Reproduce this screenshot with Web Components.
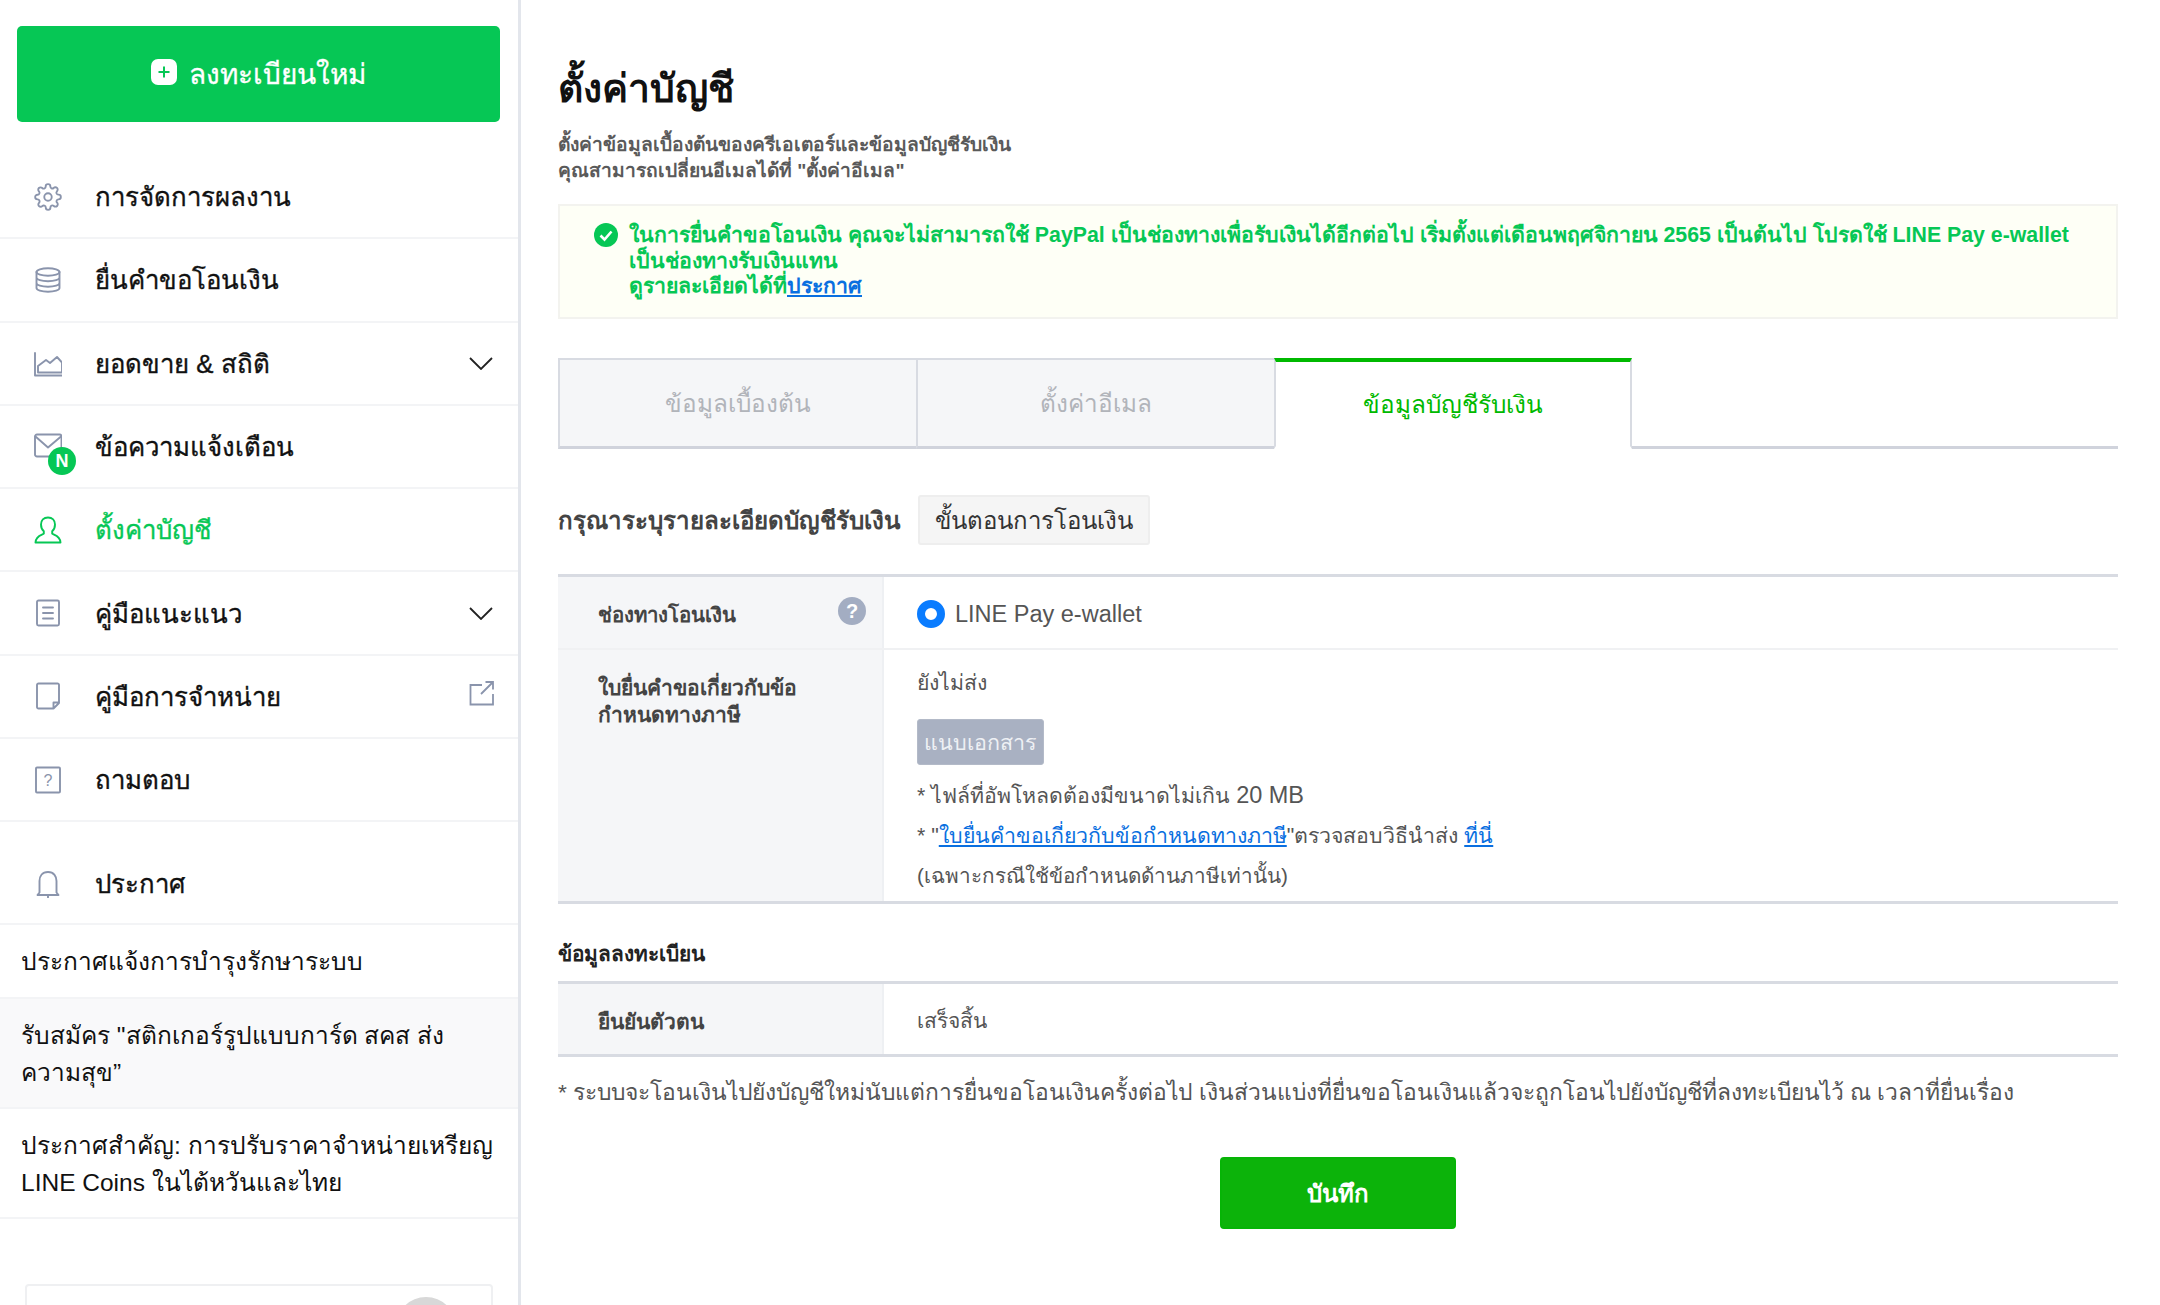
<!doctype html>
<html lang="th"><head><meta charset="utf-8"><title>ตั้งค่าบัญชี</title>
<style>
html,body{margin:0;height:1305px;overflow:hidden;background:#fff;font-family:"Liberation Sans","Noto Sans",sans-serif;color:#111}
</style></head><body>
<app-shell>
  <side-nav slot="side"></side-nav>
  <account-page slot="main"></account-page>
</app-shell>
<script>
const stroke = c => `fill="none" stroke="${c}" stroke-width="1.900" stroke-linejoin="round" stroke-linecap="round"`
const icons = {
  gear: `<g transform="scale(1.167)" stroke-width="1.600"><circle cx="12" cy="12" r="3.200"/><path d="M19.4 15a1.65 1.65 0 0 0 .33 1.82l.06.06a2 2 0 0 1 0 2.83 2 2 0 0 1-2.83 0l-.06-.06a1.65 1.65 0 0 0-1.82-.33 1.65 1.65 0 0 0-1 1.51V21a2 2 0 0 1-2 2 2 2 0 0 1-2-2v-.09A1.65 1.65 0 0 0 9 19.4a1.65 1.65 0 0 0-1.82.33l-.06.06a2 2 0 0 1-2.83 0 2 2 0 0 1 0-2.83l.06-.06a1.65 1.65 0 0 0 .33-1.82 1.65 1.65 0 0 0-1.51-1H3a2 2 0 0 1-2-2 2 2 0 0 1 2-2h.09A1.65 1.65 0 0 0 4.6 9a1.65 1.65 0 0 0-.33-1.82l-.06-.06a2 2 0 0 1 0-2.83 2 2 0 0 1 2.83 0l.06.06a1.65 1.65 0 0 0 1.82.33H9a1.65 1.65 0 0 0 1-1.51V3a2 2 0 0 1 2-2 2 2 0 0 1 2 2v.09a1.65 1.65 0 0 0 1 1.51 1.65 1.65 0 0 0 1.82-.33l.06-.06a2 2 0 0 1 2.83 0 2 2 0 0 1 0 2.83l-.06.06a1.65 1.65 0 0 0-.33 1.82V9a1.65 1.65 0 0 0 1.51 1H21a2 2 0 0 1 2 2 2 2 0 0 1-2 2h-.09a1.65 1.65 0 0 0-1.51 1z"/></g>`,
  db: `<ellipse cx="14" cy="6" rx="11.500" ry="3.800"/><path d="M2.500 6v16c0 2.100 5 3.800 11.500 3.800s11.500-1.700 11.500-3.800V6M2.500 11.500c0 2.100 5 3.800 11.500 3.800s11.500-1.700 11.500-3.800M2.500 17c0 2.100 5 3.800 11.500 3.800s11.500-1.700 11.500-3.800"/>`,
  chart: `<path d="M1 4v22.500h27M4 23.500h24v-10l-5-5.500-7 6-4-3-8 6z"/>`,
  mail: `<rect x="1" y="1.500" width="26.500" height="22" rx="2"/><path d="M1.500 3.500L14 14.500 27 3.500"/>`,
  user: `<path d="M14 1.500c-4.300 0-7 3-7 7 0 3 1.100 5.200 2.800 6.800v2.400c-1.300 1.400-7.800 1.800-8.300 8.800h25c-.5-7-7-7.400-8.300-8.800v-2.400c1.700-1.600 2.800-3.800 2.800-6.800 0-4-2.700-7-7-7z"/>`,
  list: `<rect x="3" y="1.500" width="22" height="25" rx="1.500"/><path d="M9 8.500h10M9 14h10M9 19.500h10"/>`,
  note: `<path d="M4.500 1.500h19a1.500 1.500 0 0 1 1.500 1.500v18l-5.500 5.500h-15a1.500 1.500 0 0 1-1.500-1.500V3a1.500 1.500 0 0 1 1.500-1.500zM25 20.500h-5.500v6"/>`,
  faq: `<rect x="2" y="1.500" width="24" height="25" rx="1"/><text x="14" y="20" font-family="Liberation Sans" font-size="16" text-anchor="middle" fill="#8a94ac" stroke="none">?</text>`,
  bell: `<path d="M14 2c-6 0-8.500 4.500-8.500 9v11.500L3.500 25h21l-2-2.500V11c0-4.500-2.500-9-8.500-9zM14 25v2.500"/>`
}

class AppShell extends HTMLElement {
  constructor () {
    super()
    this.attachShadow({mode: 'open'}).innerHTML = `<style>
      :host{display:grid;grid-template-columns:521px 1fr;height:1305px;overflow:hidden}
      .side{border-right:3px solid #e3e6ec;box-sizing:border-box;overflow:hidden}
      .main{padding:0 42px 0 37px;min-width:0}
    </style>
    <div class="side"><slot name="side"></slot></div>
    <div class="main"><slot name="main"></slot></div>`
  }
}

class NavRow extends HTMLElement {
  constructor () {
    super()
    const color = this.hasAttribute('active') ? '#06c755' : '#8a94ac'
    const badge = this.hasAttribute('badge') ? '<b class="badge">N</b>' : ''
    const h = this.getAttribute('h') || 81.3
    const top = this.getAttribute('top') || 0
    this.attachShadow({mode: 'open'}).innerHTML = `<style>
      :host{display:flex;align-items:center;box-sizing:content-box;height:${h - top}px;padding:${top}px 24px 0 34px;border-bottom:2px solid #f3f4f6;
        font-size:25.800px;-webkit-text-stroke:.35px currentColor;color:${this.hasAttribute('active') ? '#06c755' : '#111'}}
      .ico{position:relative;width:28px;height:28px;flex:none;margin-right:33px}
      svg{display:block}
      .t{flex:1}
      .badge{position:absolute;left:14px;top:14px;width:28px;height:28px;border-radius:50%;background:#06c755;color:#fff;
        font:bold 18px/28px "Liberation Sans";text-align:center;-webkit-text-stroke:0}
    </style>
    <span class="ico"><svg width="28" height="28" viewBox="0 0 28 28" ${stroke(color)}>${icons[this.getAttribute('icon')]}</svg>${badge}</span>
    <span class="t"><slot></slot></span>
    <slot name="end"></slot>`
  }
}

class NewsRow extends HTMLElement {
  constructor () {
    super()
    this.attachShadow({mode: 'open'}).innerHTML = `<style>
      :host{display:block;padding:${this.getAttribute('pad') || '18px 21px 16px'};font-size:24.500px;line-height:37px;color:#111;border-bottom:2px solid #f3f4f6}
      :host([shade]){background:#f9f9fa}
    </style><slot></slot>`
  }
}

class SideNav extends HTMLElement {
  constructor () {
    super()
    const chev = `<svg slot="end" width="24" height="13" viewBox="0 0 24 13" fill="none" stroke="#222" stroke-width="1.800" style="margin-right:1px"><path d="M1 1l11 11L23 1"/></svg>`
    this.attachShadow({mode: 'open'}).innerHTML = `<style>
      :host{display:block}
      .new{display:flex;align-items:center;justify-content:center;gap:12px;height:96px;margin:26px 18px 34px 17px;background:#06c755;border-radius:5px;
        color:#fff;font-size:28px;-webkit-text-stroke:.3px #fff}
      .plus{width:26px;height:26px;background:#fff;border-radius:7px;position:relative;top:-2px}
      .plus svg{display:block}
      .card{height:60px;margin:65px 25px 0 25px;border:2px solid #eff0f2;border-radius:4px;position:relative;overflow:hidden}
      .card i{position:absolute;right:35px;top:11px;width:60px;height:60px;border-radius:50%;background:#d8d8d8}
    </style>
    <div class="new"><span class="plus"><svg width="26" height="26" viewBox="0 0 26 26" stroke="#06c755" stroke-width="2"><path d="M13 7.500v11M7.500 13h11"/></svg></span><span>ลงทะเบียนใหม่</span></div>
    <nav-row icon="gear">การจัดการผลงาน</nav-row>
    <nav-row icon="db">ยื่นคำขอโอนเงิน</nav-row>
    <nav-row icon="chart">ยอดขาย &amp; สถิติ${chev}</nav-row>
    <nav-row icon="mail" badge>ข้อความแจ้งเตือน</nav-row>
    <nav-row icon="user" active>ตั้งค่าบัญชี</nav-row>
    <nav-row icon="list">คู่มือแนะแนว${chev}</nav-row>
    <nav-row icon="note">คู่มือการจำหน่าย<svg slot="end" width="25" height="25" viewBox="0 0 25 25" fill="none" stroke="#8a94ac" stroke-width="1.800" style="position:relative;top:-3px"><path d="M13 4H1.500v19.500H24V13M12 13L24 1M16.500 1H24v7.500"/></svg></nav-row>
    <nav-row icon="faq">ถามตอบ</nav-row>
    <nav-row icon="bell" h="101" top="22">ประกาศ</nav-row>
    <news-row pad="18px 21px 17px">ประกาศแจ้งการบำรุงรักษาระบบ</news-row>
    <news-row shade>รับสมัคร "สติกเกอร์รูปแบบการ์ด สคส ส่งความสุข”</news-row>
    <news-row>ประกาศสำคัญ: การปรับราคาจำหน่ายเหรียญ LINE Coins ในไต้หวันและไทย</news-row>
    <div class="card"><i></i></div>`
  }
}

class NoticeBox extends HTMLElement {
  constructor () {
    super()
    this.attachShadow({mode: 'open'}).innerHTML = `<style>
      :host{display:flex;gap:11px;box-sizing:border-box;height:115px;background:#feffF6;border:2px solid #f3f3ef;padding:17px 30px 0 34px;
        color:#06c755;font-size:21.300px;line-height:25.500px;font-weight:bold}
      svg{flex:none;margin-top:0}
    </style>
    <svg width="24" height="24" viewBox="0 0 24 24"><circle cx="12" cy="12" r="12" fill="#06c755"/><path d="M6.500 12.500l4 4 7-8" fill="none" stroke="#fff" stroke-width="2.600"/></svg>
    <div><slot></slot></div>`
  }
}

class TabBar extends HTMLElement {
  constructor () {
    super()
    this.attachShadow({mode: 'open'}).innerHTML = `<style>
      :host{display:flex;height:91px;box-sizing:border-box;border-bottom:3px solid #d0d3dc;margin-top:39px}
      div{box-sizing:border-box;width:358px;height:91px;margin-bottom:-3px;display:flex;align-items:center;justify-content:center;font-size:24.300px;
        background:#f5f6f8;color:#b1b4ba;border:2px solid #d8dbe2;border-right:0;border-bottom:3px solid #d0d3dc}
      .on{background:#fff;color:#00b900;border:0;border-top:4px solid #00b900;border-left:2px solid #d8dbe2;border-right:2px solid #d8dbe2;border-bottom:3px solid #fff}
    </style>
    <div>ข้อมูลเบื้องต้น</div><div>ตั้งค่าอีเมล</div><div class="on">ข้อมูลบัญชีรับเงิน</div>`
  }
}

class InfoRow extends HTMLElement {
  constructor () {
    super()
    this.attachShadow({mode: 'open'}).innerHTML = `<style>
      :host{display:grid;grid-template-columns:326px 1fr;border-bottom:2px solid #f0f1f3;font-size:21.300px}
      :host([last]){border-bottom:3px solid #d8dbe2}
      .h{background:#f5f6f8;border-right:2px solid #eef0f3;padding:24px 24px 0 40px;font-weight:bold;font-size:21px;color:#444;line-height:27px;position:relative}
      .d{padding:0 0 0 33px;color:#555;min-width:0}
    </style>
    <div class="h"><slot name="head"></slot></div><div class="d"><slot></slot></div>`
  }
}

class AccountPage extends HTMLElement {
  constructor () {
    super()
    this.attachShadow({mode: 'open'}).innerHTML = `<style>
      :host{display:block}
      h1{margin:0;padding-top:59px;font-size:39px;line-height:60px;font-weight:bold;color:#111}
      .desc{margin:13px 0 0;font-size:19.200px;line-height:26px;color:#5a5a5a;font-weight:bold}
      .desc + *{margin-top:20px}
      a{color:#0a6fe0}
      .howto{display:flex;align-items:center;gap:18px;margin-top:46px;font-size:24.100px;font-weight:bold;color:#444}
      .howto span{box-sizing:border-box;height:50px;padding:0 15px;display:flex;align-items:center;background:#f5f5f5;border:2px solid #eee;border-radius:3px;font-size:24px;font-weight:normal;color:#333}
      .tbl{border-top:3px solid #d8dbe2;margin-top:29px}
      .t{line-height:27px}
      .center{display:flex;align-items:center;height:100%;padding-top:3px;box-sizing:border-box}
      .help{position:absolute;right:16px;top:20px;width:28px;height:28px;border-radius:50%;background:#a3adc2;color:#fff;font:bold 20px/28px "Liberation Sans";text-align:center}
      .radio{box-sizing:border-box;width:28px;height:28px;border-radius:50%;border:8px solid #0a7cff;background:#fff;margin-right:10px;flex:none}
      .en{font-size:23.500px}
      .attach{box-sizing:border-box;width:127px;height:46px;background:#a9b1c2;border:1px solid #b3bac8;border-radius:3px;color:#eef0f4;font-size:21.500px;display:flex;align-items:center;justify-content:center;margin:22px 0 10px}
      .small{line-height:40px}
      h2{margin:36px 0 14px;font-size:20.800px;line-height:27px;font-weight:bold;color:#222}
      .foot{margin:21px 0 0;font-size:22.800px;line-height:28px;color:#555;white-space:nowrap}
      .save{display:flex;align-items:center;justify-content:center;box-sizing:border-box;width:236px;height:72px;margin:51px auto 0;background:#0cb30a;border:2px solid #06b406;border-radius:4px;color:#fff;font-size:24px;font-weight:bold}
    </style>
    <h1>ตั้งค่าบัญชี</h1>
    <p class="desc">ตั้งค่าข้อมูลเบื้องต้นของครีเอเตอร์และข้อมูลบัญชีรับเงิน<br>คุณสามารถเปลี่ยนอีเมลได้ที่ "ตั้งค่าอีเมล"</p>
    <notice-box>ในการยื่นคำขอโอนเงิน คุณจะไม่สามารถใช้ PayPal เป็นช่องทางเพื่อรับเงินได้อีกต่อไป เริ่มตั้งแต่เดือนพฤศจิกายน 2565 เป็นต้นไป โปรดใช้ LINE Pay e-wallet เป็นช่องทางรับเงินแทน<br>ดูรายละเอียดได้ที่<a href="#" style="color:#0a6fe0">ประกาศ</a></notice-box>
    <tab-bar></tab-bar>
    <div class="howto">กรุณาระบุรายละเอียดบัญชีรับเงิน<span>ขั้นตอนการโอนเงิน</span></div>
    <div class="tbl">
      <info-row style="height:71px"><span slot="head" style="font-size:20.400px">ช่องทางโอนเงิน<span class="help">?</span></span>
        <div class="center"><span class="radio"></span><span class="en">LINE Pay e-wallet</span></div></info-row>
      <info-row last style="height:251px"><span slot="head">ใบยื่นคำขอเกี่ยวกับข้อกำหนดทางภาษี</span>
        <div style="padding-top:20px" class="t">ยังไม่ส่ง</div>
        <div class="attach">แนบเอกสาร</div>
        <div class="small">* ไฟล์ที่อัพโหลดต้องมีขนาดไม่เกิน <span class="en">20 MB</span></div>
        <div class="small">* "<a href="#">ใบยื่นคำขอเกี่ยวกับข้อกำหนดทางภาษี</a>"ตรวจสอบวิธีนำส่ง <a href="#">ที่นี่</a></div>
        <div class="small" style="font-size:20.700px">(เฉพาะกรณีใช้ข้อกำหนดด้านภาษีเท่านั้น)</div></info-row>
    </div>
    <h2>ข้อมูลลงทะเบียน</h2>
    <div class="tbl" style="margin-top:0">
      <info-row last style="height:70px"><span slot="head">ยืนยันตัวตน</span><div class="center" style="font-size:21px">เสร็จสิ้น</div></info-row>
    </div>
    <p class="foot">* ระบบจะโอนเงินไปยังบัญชีใหม่นับแต่การยื่นขอโอนเงินครั้งต่อไป เงินส่วนแบ่งที่ยื่นขอโอนเงินแล้วจะถูกโอนไปยังบัญชีที่ลงทะเบียนไว้ ณ เวลาที่ยื่นเรื่อง</p>
    <div class="save">บันทึก</div>`
  }
}

customElements.define('app-shell', AppShell)
customElements.define('nav-row', NavRow)
customElements.define('news-row', NewsRow)
customElements.define('side-nav', SideNav)
customElements.define('notice-box', NoticeBox)
customElements.define('tab-bar', TabBar)
customElements.define('info-row', InfoRow)
customElements.define('account-page', AccountPage)
</script></body></html>
